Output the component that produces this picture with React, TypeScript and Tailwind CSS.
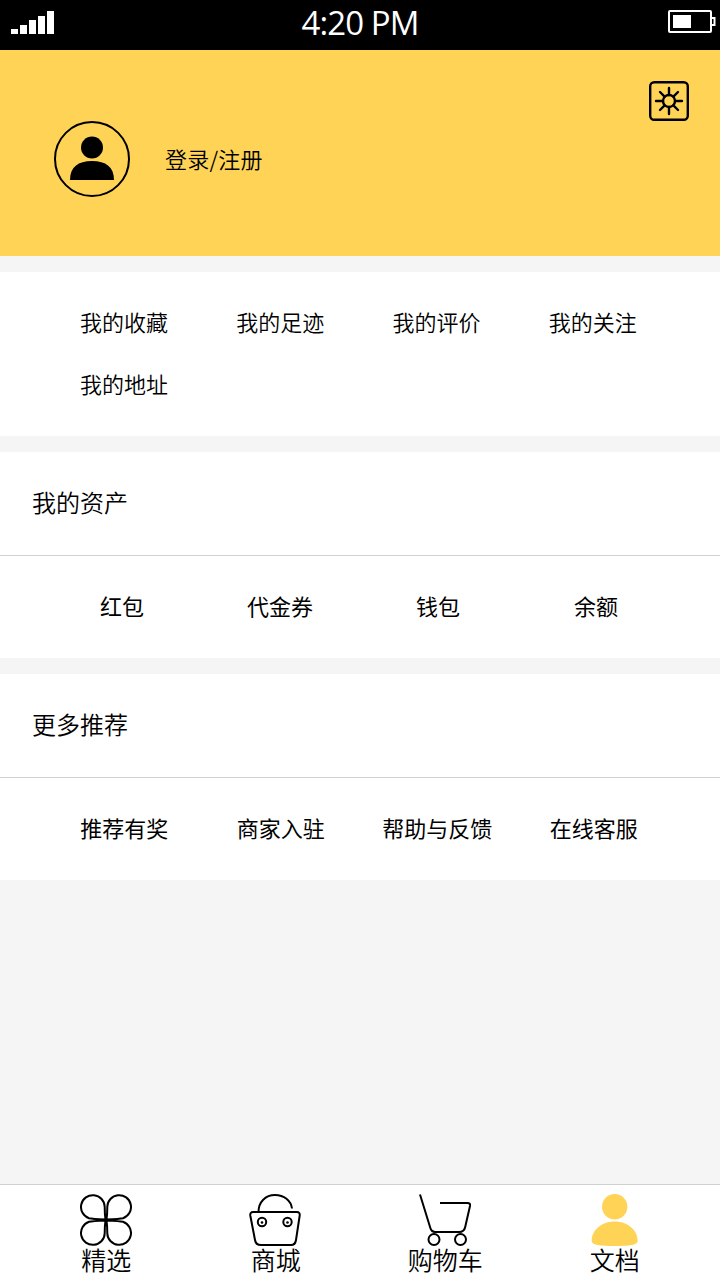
import React from "react";

const collections = ["我的收藏", "我的足迹", "我的评价", "我的关注", "我的地址"];
const assets = ["红包", "代金券", "钱包", "余额"];
const more = ["推荐有奖", "商家入驻", "帮助与反馈", "在线客服"];

function StatusBar() {
  return (
    <header className="flex h-[50px] shrink-0 items-center justify-between bg-black text-white">
      <svg className="ml-[11px] h-[50px] w-[60px]" viewBox="0 0 60 50" fill="#fff">
        <rect x="0" y="29" width="7" height="5" />
        <rect x="9" y="25" width="7" height="9" />
        <rect x="18" y="20" width="7" height="14" />
        <rect x="27" y="16" width="7" height="18" />
        <rect x="36" y="11" width="7" height="23" />
      </svg>
      <span className="pb-1 font-['Open_Sans',sans-serif] text-[33px] leading-[46px] tracking-[-0.9px]">4:20 PM</span>
      <svg className="mr-1 h-[50px] w-[67px]" viewBox="0 0 67 50" fill="none" stroke="#fff">
        <rect x="20" y="11" width="42" height="21" rx="1" strokeWidth="2" />
        <rect x="24" y="15" width="18" height="13" fill="#fff" stroke="none" />
        <path d="M62 18h3.500v7H62" strokeWidth="2" />
      </svg>
    </header>
  );
}

function Profile() {
  return (
    <section className="flex h-[206px] shrink-0 items-start bg-[#ffd456]">
      <svg className="mt-[70px] ml-[53px] h-[78px] w-[78px]" viewBox="0 0 78 78">
        <circle cx="39" cy="39" r="37" fill="none" stroke="#000" strokeWidth="2" />
        <circle cx="39" cy="27.500" r="11" />
        <path d="M17 60c0-13 8-19 22-19s22 6 22 19z" />
      </svg>
      <a className="mt-[92px] ml-[34px] text-[22px] leading-8 font-[350] tracking-[0.2px]">登录/注册</a>
      <svg className="mt-[31px] mr-[31px] ml-auto h-10 w-10" viewBox="0 0 40 40" fill="none" stroke="#000">
        <rect x="1.200" y="1.200" width="37.600" height="37.600" rx="4" strokeWidth="2.400" />
        <circle cx="20" cy="20" r="6" strokeWidth="2.400" />
        <path
          d="M20 7v7M20 26v7M7 20h7M26 20h7M11 11l4.600 4.600M24.400 24.400L29 29M11 29l4.600-4.600M24.400 15.600L29 11"
          strokeWidth="2.400"
          strokeLinecap="round"
        />
      </svg>
    </section>
  );
}

function Section({ title, items, className }: { title: string; items: string[]; className: string }) {
  return (
    <section className="mt-4 h-[206px] shrink-0 bg-white">
      <h2 className="flex h-[104px] items-center border-b border-[#d0d0d0] pb-[3px] pl-8 text-[24px] font-[350]">
        {title}
      </h2>
      <ul className={`grid h-[102px] grid-cols-4 items-center pb-[3px] text-center text-[22px] ${className}`}>
        {items.map((item) => (
          <li key={item}>{item}</li>
        ))}
      </ul>
    </section>
  );
}

// one petal of the clover, the other three are mirrored copies
const petal = "M25.500 25.500Q24.700 20 24.700 12.800A11.850 11.850 0 1 0 9 24.200Q12 24.900 25.500 25.500z";

const tabs = [
  {
    label: "精选",
    icon: (
      <g strokeLinejoin="round">
        <path d={petal} />
        <path d={petal} transform="matrix(-1 0 0 1 52 0)" />
        <path d={petal} transform="matrix(1 0 0 -1 0 52)" />
        <path d={petal} transform="matrix(-1 0 0 -1 52 52)" />
      </g>
    ),
  },
  {
    label: "商城",
    icon: (
      <>
        <path d="M9.500 18C9.500 8 16.500 1 26 1c9 0 16 5.500 17 13.500" />
        <path d="M4 18h44c2 0 3 1.500 2.700 3.500L47 46c-.5 3.500-2 5-5 5H12c-3.500 0-5.500-2-6-5L1.300 21.500C1 19.500 2 18 4 18z" />
        <circle cx="13" cy="28" r="4.200" />
        <circle cx="38.500" cy="28" r="4.200" />
        <circle cx="13" cy="28.500" r="1.300" fill="#000" stroke="none" />
        <circle cx="38.500" cy="28.500" r="1.300" fill="#000" stroke="none" />
      </>
    ),
  },
  {
    label: "购物车",
    icon: (
      <>
        <path d="M1 .5l10.500 34c.8 2.500 2 3.500 4.500 3.500h24c3.500 0 5.500-1.500 6.200-5L51 12c.4-2-.5-3-2.500-3H21" />
        <circle cx="15" cy="45.500" r="5.500" />
        <circle cx="41.500" cy="45.500" r="5.500" />
      </>
    ),
  },
  {
    label: "文档",
    icon: (
      <g fill="#ffd456" stroke="none">
        <circle cx="26.700" cy="12.700" r="12.700" />
        <path d="M3.700 47c0-11 10-19.500 23-19.500s23 8.500 23 19.500c0 3-4 5-23 5s-23-2-23-5z" />
      </g>
    ),
  },
];

function TabBar() {
  return (
    <nav className="mt-auto grid h-24 shrink-0 grid-cols-4 border-t border-[#d0d0d0] bg-white px-[21px] pt-[9px]">
      {tabs.map(({ label, icon }) => (
        <a key={label} className="flex flex-col items-center">
          <svg className="h-[52px] w-[52px] shrink-0" viewBox="0 0 52 52" fill="none" stroke="#000" strokeWidth="2">
            {icon}
          </svg>
          <span className="-mt-0.5 pl-px text-[25px] leading-[30px] font-[350]">{label}</span>
        </a>
      ))}
    </nav>
  );
}

export default function App() {
  return (
    <div className="flex h-[1280px] w-[720px] flex-col overflow-hidden bg-[#f5f5f5] font-['Noto_Sans_CJK_SC',sans-serif] text-black">
      <StatusBar />
      <Profile />
      <section className="mt-4 h-[164px] shrink-0 bg-white pt-[18px] pr-[49px] pl-[46px]">
        <ul className="grid auto-rows-[62px] grid-cols-4 items-center text-center text-[22px] font-[350]">
          {collections.map((item) => (
            <li key={item}>{item}</li>
          ))}
        </ul>
      </section>
      <Section title="我的资产" items={assets} className="pr-[45px] pl-[43px]" />
      <Section title="更多推荐" items={more} className="pr-[48px] pl-[46px]" />
      <TabBar />
    </div>
  );
}
